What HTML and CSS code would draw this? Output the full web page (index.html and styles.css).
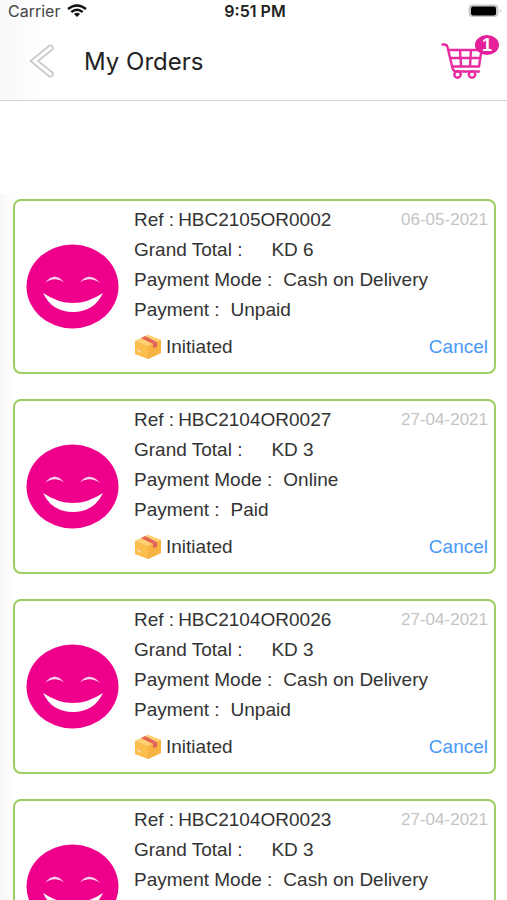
FILE: index.html
```html
<!DOCTYPE html>
<html lang="en">
<head>
<meta charset="utf-8">
<meta name="viewport" content="width=device-width, initial-scale=1">
<title>My Orders</title>
<link rel="stylesheet" href="styles.css">
</head>
<body>
<svg class="defs" aria-hidden="true">
  <defs>
    <symbol id="smile" viewBox="0 0 94 86">
      <ellipse cx="46.500" cy="42.500" rx="46" ry="42" fill="#ee008c"/>
      <path d="M19 39Q28 27 38 38Q28 32 19 39ZM54 38Q64 27 74 39Q64 32 54 38Z" fill="#fbd0e8"/>
      <path d="M17 49Q47 69 77 49Q68 68 47 68Q26 68 17 49Z" fill="#fff"/>
    </symbol>
    <symbol id="box" viewBox="0 0 28 26">
      <path d="M1 7L14 1L27 6V19L14 25L1 20Z" fill="#fbbd4b"/>
      <path d="M1 7L14 1L27 6L14 12Z" fill="#ffd071"/>
      <path d="M14 12L27 6V19L14 25Z" fill="#f6b343"/>
      <path d="M7 4L11 2L23 8V13L19 14V10Z" fill="#e36558"/>
      <path d="M3 16L7 18" stroke="#ffe3a3" stroke-width="1.5"/>
    </symbol>
  </defs>
</svg>
<div class="status-bar">
  <span class="carrier">Carrier
    <svg width="20" height="14" viewBox="0 0 20 14" aria-hidden="true"><g fill="none" stroke="#111" stroke-width="2.4"><path d="M1 5Q10 -2 19 5"/><path d="M4.300 8Q10 3.500 15.700 8"/></g><path d="M7 10Q10 7.500 13 10L10 13Z" fill="#111"/></svg>
  </span>
  <time class="clock">9:51 PM</time>
  <span class="battery"><svg width="34" height="14" viewBox="0 0 34 14" role="img" aria-label="Battery full"><rect x=".5" y=".5" width="30" height="12.500" rx="4" fill="#c9c9c9"/><rect x="3" y="2.500" width="25" height="9" rx="2" fill="#000"/><path d="M32 5Q34 7 32 9Z" fill="#bbb"/></svg></span>
</div>
<header class="header">
  <button class="back" aria-label="Back"><svg width="26" height="34" viewBox="0 0 26 34"><path d="M20.500 1.500L1.500 17L20.500 32.500Q24 33 24 29L9 17L24 5Q24 1 20.500 1.500Z" fill="#fff" stroke="#cbcbcb" stroke-width="1.800" stroke-linejoin="round"/></svg></button>
  <h1>My Orders</h1>
  <button class="cart" aria-label="Cart, 1 item">
    <svg width="42" height="36" viewBox="0 0 42 36"><g fill="none" stroke="#ea2ba0" stroke-width="2.400" stroke-linejoin="round" stroke-linecap="round"><path d="M1.500 1.500H3Q6 1.500 6.500 4L11 23Q12 28.500 15 28.500H38"/><path d="M7.500 7H40.500L38 23.500H11M9 15H39M19 7L20 23M30 7L29 23"/><circle cx="16.500" cy="31.500" r="3.200"/><circle cx="31" cy="31.500" r="3.200"/></g></svg>
    <span class="badge">1</span>
  </button>
</header>
<main class="orders">
  <article class="card">
    <svg class="avatar" aria-hidden="true"><use href="#smile"/></svg>
    <div class="info">
      <div class="line"><span>Ref :</span><span class="ref">HBC2105OR0002</span><time class="date">06-05-2021</time></div>
      <div class="line"><span>Grand Total :</span><span class="amount">KD 6</span></div>
      <div class="line"><span>Payment Mode :</span><span class="value">Cash on Delivery</span></div>
      <div class="line"><span>Payment :</span><span class="value">Unpaid</span></div>
      <div class="line state"><svg class="box" aria-hidden="true"><use href="#box"/></svg><span>Initiated</span><button class="cancel">Cancel</button></div>
    </div>
  </article>
  <article class="card">
    <svg class="avatar" aria-hidden="true"><use href="#smile"/></svg>
    <div class="info">
      <div class="line"><span>Ref :</span><span class="ref">HBC2104OR0027</span><time class="date">27-04-2021</time></div>
      <div class="line"><span>Grand Total :</span><span class="amount">KD 3</span></div>
      <div class="line"><span>Payment Mode :</span><span class="value">Online</span></div>
      <div class="line"><span>Payment :</span><span class="value">Paid</span></div>
      <div class="line state"><svg class="box" aria-hidden="true"><use href="#box"/></svg><span>Initiated</span><button class="cancel">Cancel</button></div>
    </div>
  </article>
  <article class="card">
    <svg class="avatar" aria-hidden="true"><use href="#smile"/></svg>
    <div class="info">
      <div class="line"><span>Ref :</span><span class="ref">HBC2104OR0026</span><time class="date">27-04-2021</time></div>
      <div class="line"><span>Grand Total :</span><span class="amount">KD 3</span></div>
      <div class="line"><span>Payment Mode :</span><span class="value">Cash on Delivery</span></div>
      <div class="line"><span>Payment :</span><span class="value">Unpaid</span></div>
      <div class="line state"><svg class="box" aria-hidden="true"><use href="#box"/></svg><span>Initiated</span><button class="cancel">Cancel</button></div>
    </div>
  </article>
  <article class="card">
    <svg class="avatar" aria-hidden="true"><use href="#smile"/></svg>
    <div class="info">
      <div class="line"><span>Ref :</span><span class="ref">HBC2104OR0023</span><time class="date">27-04-2021</time></div>
      <div class="line"><span>Grand Total :</span><span class="amount">KD 3</span></div>
      <div class="line"><span>Payment Mode :</span><span class="value">Cash on Delivery</span></div>
    </div>
  </article>
</main>
</body>
</html>
```
FILE: styles.css
```css
* { box-sizing: border-box; }
html { height: 100%; }
body {
  margin: 0;
  height: 100%;
  overflow: hidden;
  display: flex;
  flex-direction: column;
  background: #fff;
  color: #333;
  font-family: "Liberation Sans", Arial, sans-serif;
  font-size: 19px;
}
button { padding: 0; border: 0; background: none; font: inherit; cursor: pointer; }
svg { display: block; flex: none; }
.defs { position: absolute; width: 0; height: 0; }
.status-bar {
  display: grid;
  grid-template-columns: 1fr auto 1fr;
  align-items: center;
  height: 22px;
  flex: none;
  padding: 0 5px 0 8px;
  font-family: Inter, sans-serif;
  font-size: 16px;
  background: linear-gradient(90deg, #f8f8f8, #fff 44px);
}
.carrier { display: flex; align-items: center; gap: 7px; color: #444; }
.clock { font-weight: 600; color: #222; }
.battery { justify-self: end; }
.header {
  display: flex;
  align-items: center;
  flex: none;
  height: 79px;
  padding: 0 24px 0 29px;
  border-bottom: 1px solid #d4d4d4;
  background: linear-gradient(90deg, #f8f8f8, #fff 44px);
}
.header h1 {
  flex: 1;
  margin: 0 0 0 29px;
  font-family: Inter, sans-serif;
  font-size: 24px;
  font-weight: 400;
  color: #222;
}
.cart { position: relative; }
.badge {
  position: absolute;
  top: -8px;
  right: -16px;
  width: 24px;
  height: 20px;
  border-radius: 50%;
  background: #e5209a;
  color: #fff;
  font-size: 18px;
  font-weight: 700;
  line-height: 20px;
}
.orders {
  flex: 1;
  min-height: 0;
  display: flex;
  flex-direction: column;
  gap: 25px;
  margin-top: 94px;
  padding: 4px 11px 0 13px;
  background: linear-gradient(90deg, #f7f7f7, #fff 14px);
}
.card {
  display: flex;
  flex: none;
  gap: 14px;
  padding: 4px 6px 10px 11px;
  border: 2px solid #9ccf60;
  border-radius: 8px;
  background: #fff;
}
.avatar { width: 94px; height: 86px; margin-top: 39px; }
.info { flex: 1; min-width: 0; }
.line { display: flex; align-items: center; height: 30px; white-space: nowrap; }
.ref { margin-left: 4px; }
.value { margin-left: 11px; }
.amount { margin-left: 29px; }
.date, .cancel { margin-left: auto; }
.date { font-size: 17px; color: #c4c4c4; }
.state { margin-top: 7px; }
.box { width: 28px; height: 26px; margin-right: 4px; }
.cancel { color: #4898f8; }
```
